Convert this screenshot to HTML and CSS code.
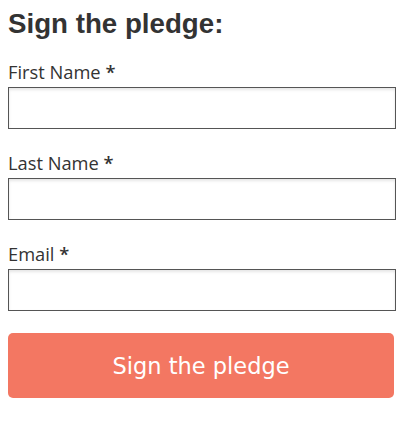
FILE: index.html
```html
<!DOCTYPE html>
<html>
<head>
<meta charset="utf-8">
<link rel="stylesheet" href="styles.css">
</head>
<body>
<form class="pledge">
  <h2 class="title">Sign the pledge:</h2>
  <div class="field">
    <label class="label">First Name <span class="req">*</span></label>
    <input class="input" type="text">
  </div>
  <div class="field">
    <label class="label">Last Name <span class="req">*</span></label>
    <input class="input" type="text">
  </div>
  <div class="field">
    <label class="label">Email <span class="req">*</span></label>
    <input class="input" type="email">
  </div>
  <button class="submit" type="button">Sign the pledge</button>
</form>
</body>
</html>
```
FILE: styles.css
```css
html, body {
  margin: 0;
  padding: 0;
  background: #fff;
}
body {
  padding: 8px 19px 0 8px;
}
.pledge {
  display: flex;
  flex-direction: column;
}
.title {
  margin: 0 0 21px;
  font-family: "Liberation Sans", Arial, sans-serif;
  font-weight: bold;
  font-size: 27.7px;
  line-height: 31px;
  color: #333;
}
.field {
  display: flex;
  flex-direction: column;
  gap: 3px;
  margin-bottom: 22px;
}
.label {
  font-family: "Open Sans", sans-serif;
  font-size: 18.3px;
  line-height: 24px;
  color: #333;
}
.req {
  font-weight: 600;
}
.input {
  box-sizing: border-box;
  height: 42px;
  width: 100%;
  margin: 0;
  border: 1px solid #555;
  border-radius: 0;
  box-shadow: inset 0 2px 3px rgba(0,0,0,0.1);
  background: #fff;
}
.submit {
  box-sizing: border-box;
  height: 65px;
  width: 386px;
  padding: 0;
  border: none;
  border-radius: 5px;
  background: #f37762;
  color: #fff;
  font-family: "DejaVu Sans", sans-serif;
  font-size: 22.5px;
  cursor: pointer;
}
```
